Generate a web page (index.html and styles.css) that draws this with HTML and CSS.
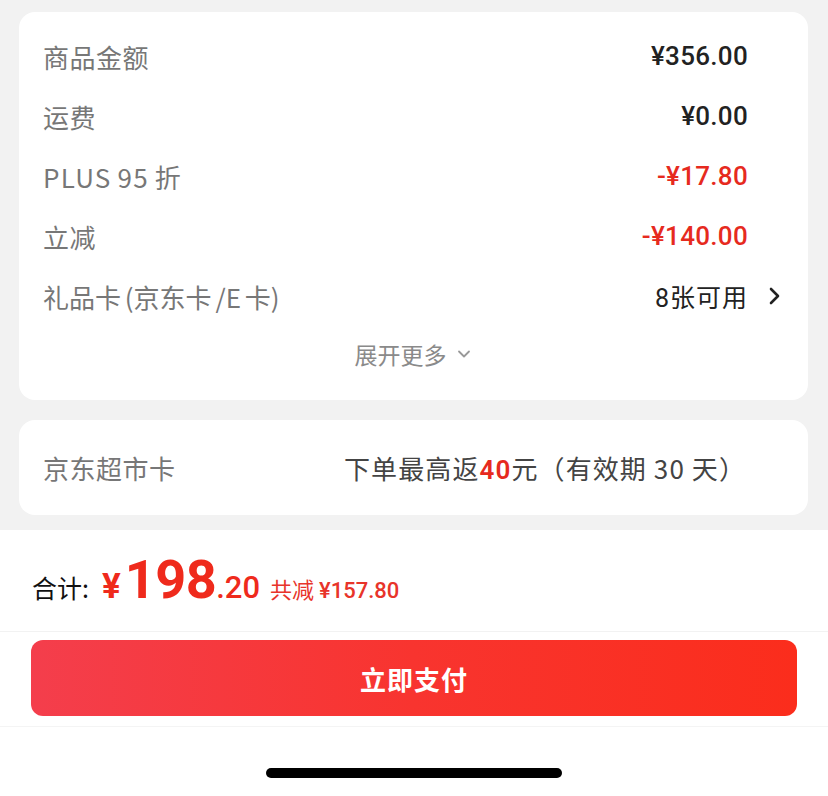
FILE: index.html
```html
<!DOCTYPE html>
<html lang="zh">
<head>
<meta charset="utf-8">
<link rel="stylesheet" href="styles.css">
</head>
<body>
<div class="top">
  <div class="card detail">
    <div class="row"><span class="label">商品金额</span><span class="value num">¥356.00</span><span class="slot"></span></div>
    <div class="row"><span class="label">运费</span><span class="value num">¥0.00</span><span class="slot"></span></div>
    <div class="row"><span class="label wide">PLUS 95 折</span><span class="value num red">-¥17.80</span><span class="slot"></span></div>
    <div class="row"><span class="label">立减</span><span class="value num red">-¥140.00</span><span class="slot"></span></div>
    <div class="row"><span class="label tight">礼品卡 (京东卡 /E 卡)</span><span class="value"><span class="num">8</span>张可用</span><span class="slot"><svg class="chev" viewBox="0 0 14 20" width="14" height="20"><path d="M3 3 L10 10 L3 17" fill="none" stroke="#222" stroke-width="2.6" stroke-linecap="round" stroke-linejoin="round"/></svg></span></div>
    <div class="more">展开更多 <svg viewBox="0 0 14 10" width="14" height="10"><path d="M2 2.5 L7 7.5 L12 2.5" fill="none" stroke="#999" stroke-width="1.8" stroke-linecap="round" stroke-linejoin="round"/></svg></div>
  </div>
  <div class="card club">
    <span class="label">京东超市卡</span>
    <span class="promo">下单最高返<span class="num red">40</span>元（有效期 30 天）</span>
  </div>
</div>
<div class="footer">
  <div class="total">
    <span class="sum-label">合计:</span>
    <span class="price"><span class="yen">¥</span><span class="big">198</span><span class="dec">.20</span></span>
    <span class="saved">共减 <span class="num">¥157.80</span></span>
  </div>
  <div class="btn-wrap">
    <button class="pay">立即支付</button>
  </div>
  <div class="home"><span class="bar"></span></div>
</div>
</body>
</html>
```
FILE: styles.css
```css
* { box-sizing: border-box; }
html, body { margin: 0; padding: 0; }
body {
  width: 828px;
  height: 796px;
  overflow: hidden;
  background: #fff;
  font-family: "Noto Sans CJK SC", "Noto Sans", sans-serif;
  color: #222;
}
.num { font-family: "Roboto", "Noto Sans", sans-serif; }
.red { color: #e62a1e; }

.top {
  background: #f2f2f2;
  padding: 12px 20px 15px 19px;
  display: flex;
  flex-direction: column;
  gap: 20px;
}
.card {
  background: #fff;
  border-radius: 16px;
}
.detail {
  padding: 14px 26px 18px 24px;
}
.row {
  height: 60px;
  display: grid;
  grid-template-columns: 1fr auto 34px;
  align-items: center;
}
.label {
  font-size: 26px;
  color: #777;
  letter-spacing: 0.5px;
  word-spacing: -1px;
}
.label.wide { letter-spacing: 1.2px; }
.label.tight { letter-spacing: 0; word-spacing: -2px; }
.value {
  font-size: 25px;
  color: #222;
  letter-spacing: 1px;
}
.value.num { font-weight: 500; font-size: 26px; letter-spacing: 0.3px; }
.value.red { color: #e62a1e; }
.slot {
  display: flex;
  justify-content: flex-end;
  align-items: center;
}
.chev { display: block; }
.more {
  height: 56px;
  display: flex;
  align-items: center;
  justify-content: center;
  gap: 10px;
  font-size: 23px;
  color: #8a8a8a;
}
.more svg { display: block; }

.club {
  height: 95px;
  display: flex;
  align-items: center;
  padding: 0 24px;
}
.club .label { width: 301px; }
.promo {
  font-size: 26px;
  color: #444;
  letter-spacing: 1.1px;
}
.promo .num { font-weight: 600; }

.footer { display: flex; flex-direction: column; }
.total {
  height: 102px;
  display: flex;
  align-items: baseline;
  padding: 18px 0 0 32px;
  border-bottom: 1px solid #f2f2f2;
}
.sum-label {
  font-size: 25px;
  color: #111;
  margin-right: 13px;
}
.price {
  color: #ef2a1c;
  font-family: "Roboto", "Noto Sans", sans-serif;
  font-weight: 700;
}
.yen { font-size: 35px; margin-right: 4px; }
.big { font-size: 54px; letter-spacing: -0.5px; }
.dec { font-size: 31px; font-weight: 500; }
.saved {
  margin-left: 10px;
  font-size: 22px;
  color: #e8342a;
}
.saved .num { font-weight: 500; font-size: 22px; }

.btn-wrap {
  padding: 8px 31px 10px 31px;
  border-bottom: 1px solid #f4f4f4;
}
.pay {
  display: block;
  width: 100%;
  height: 76px;
  border: 0;
  border-radius: 12px;
  background: linear-gradient(90deg, #f43e4c 0%, #f8342f 50%, #fb2d1c 100%);
  color: #fff;
  font-family: "Noto Sans CJK SC", sans-serif;
  font-size: 26px;
  font-weight: 700;
  letter-spacing: 1px;
}
.home {
  height: 68px;
  display: flex;
  justify-content: center;
  padding-top: 41px;
}
.bar {
  display: block;
  width: 296px;
  height: 10px;
  border-radius: 5px;
  background: #000;
}
```
